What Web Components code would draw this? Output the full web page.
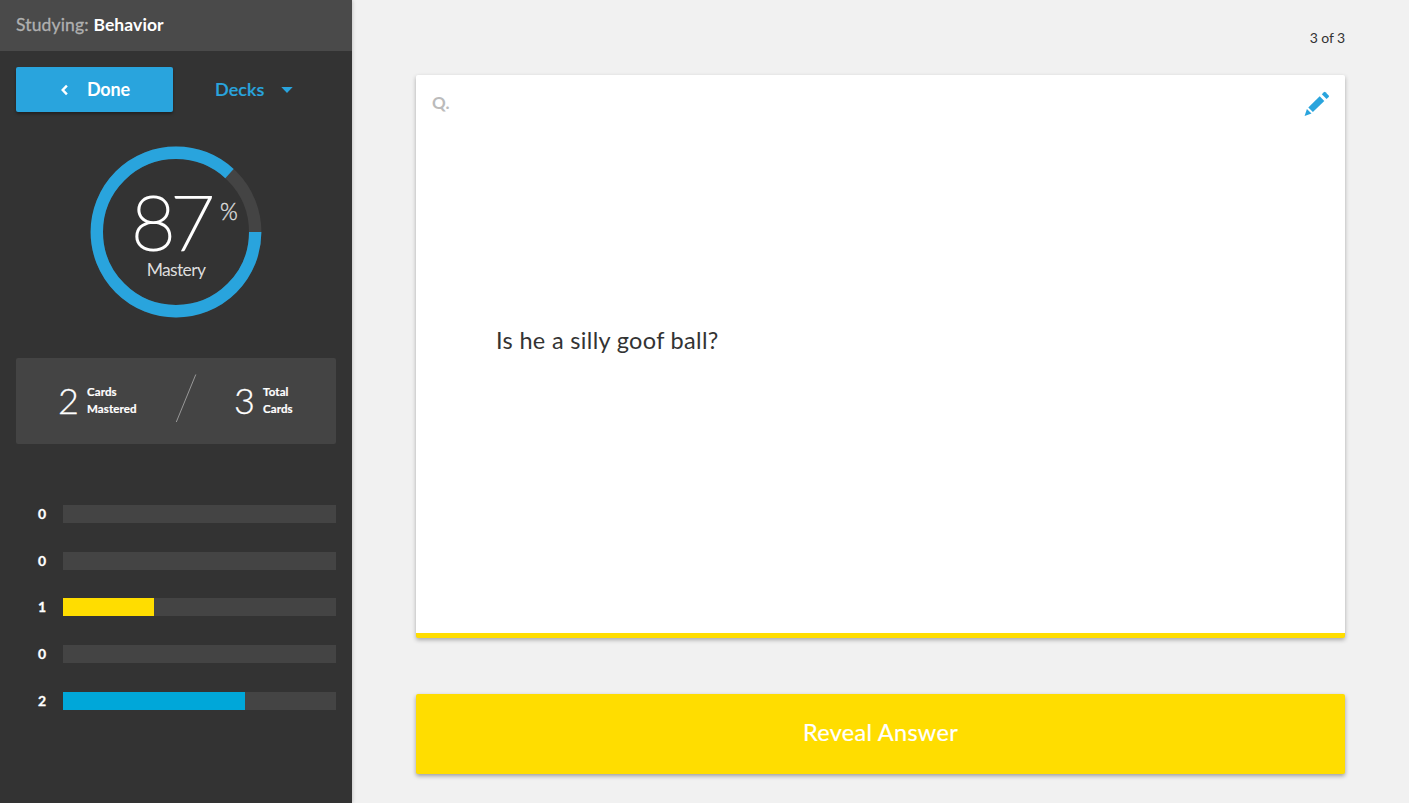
<!DOCTYPE html>
<html lang="en">
<head>
<meta charset="utf-8">
<title>Studying: Behavior</title>
<style>
html,body{margin:0;height:100%;overflow:hidden}
body{font-family:Lato,"Open Sans",sans-serif;background:#f1f1f1;color:#333}
</style>
</head>
<body>
<study-app></study-app>
<script>
function define(name, html, setup) {
  customElements.define(name, class extends HTMLElement {
    constructor() {
      super();
      this.attachShadow({mode: 'open'});
    }
    connectedCallback() {
      const t = document.createElement('template');
      t.innerHTML = html;
      this.shadowRoot.replaceChildren(t.content.cloneNode(true));
      if (setup) setup(this, this.shadowRoot);
    }
  });
}

define('study-header', `
<style>
:host{display:flex;align-items:center;height:51px;padding:0 16px 1px;box-sizing:border-box;background:#4a4a4a;color:#b0b0b0;font-size:17.5px;line-height:22px}
span{white-space:pre}
.k{letter-spacing:.15px;-webkit-text-stroke:.3px #b0b0b0}
.v{color:#fff;font-weight:700;letter-spacing:.1px}
</style><span class="k">Studying: </span><span class="v"><slot></slot></span>`);

define('done-button', `
<style>
:host{display:flex;align-items:center;width:157px;height:45px;box-sizing:border-box;padding:0 0 2px 44px;background:#29a4dd;color:#fff;border-radius:2px;box-shadow:0 2px 3px rgba(0,0,0,.35);font-size:18px;font-weight:700;line-height:24px;letter-spacing:-.2px}
svg{margin:3px 18px 0 0;flex:none}
</style><svg width="9" height="12" viewBox="0 0 9 12"><path d="M6.9 1.6 2.7 6l4.2 4.4" fill="none" stroke="#fff" stroke-width="2.4"/></svg><slot></slot>`);

define('decks-menu', `
<style>
:host{display:flex;align-items:center;color:#29a4dd;font-size:18px;font-weight:600;line-height:24px;padding-bottom:2px;letter-spacing:.1px;-webkit-text-stroke:.2px #29a4dd}
svg{margin:3px 0 0 16px}
</style><slot></slot><svg width="12" height="6" viewBox="0 0 12 6"><path d="M.3 0h11.4L6 6z" fill="#29a4dd"/></svg>`);

define('mastery-ring', `
<style>
:host{display:grid;width:172px;height:172px}
svg,.c{grid-area:1/1}
.c{display:flex;flex-direction:column;align-items:center;color:#fff}
.n{display:flex;height:62px;margin-top:43px;width:172px;box-sizing:border-box;padding-left:41px}
.b{font-size:77px;font-weight:100;line-height:62px;letter-spacing:-5.5px;-webkit-text-stroke:2px #fff;height:62px}
.p{font-size:24px;font-weight:300;line-height:28px;margin:8px 0 0 11px;color:#ddd;-webkit-text-stroke:.4px #ddd;transform:scaleX(.95);transform-origin:0 0}
.m{font-size:17.5px;font-weight:400;line-height:22px;margin-top:8px;color:#ddd;letter-spacing:-.65px}
</style>
<svg width="172" height="172" viewBox="0 0 172 172"><circle cx="86" cy="86" r="79.2" fill="none" stroke="#444" stroke-width="12.4"/><circle cx="86" cy="86" r="79.2" fill="none" stroke="#29a4dd" stroke-width="12.4" pathLength="100" stroke-dasharray="86.8 13.2"/></svg>
<div class="c"><div class="n"><span class="b"><slot></slot></span><span class="p">%</span></div><div class="m">Mastery</div></div>`);

define('card-count', `
<style>
:host{display:flex;align-items:center;color:#fff;padding-bottom:2px}
.n{font-size:36px;font-weight:300;line-height:44px;width:29px;letter-spacing:-1px;-webkit-text-stroke:.3px #fff}
.l{font-size:11.5px;font-weight:700;line-height:17px;letter-spacing:.12px;white-space:pre;-webkit-text-stroke:.2px #fff}
</style><span class="n"></span><span class="l"><slot></slot></span>`,
(h, r) => { r.querySelector('.n').textContent = h.getAttribute('value'); });

define('card-summary', `
<style>
:host{display:flex;height:86px;box-sizing:border-box;background:#444;border-radius:2px;padding-left:42px}
.d{margin:16px 36px 0 0}
</style><slot name="mastered"></slot><svg class="d" width="22" height="49" viewBox="0 0 22 49"><path d="M.3 48 19.8 .5" stroke="#999" fill="none"/></svg><slot name="total"></slot>`);

define('level-bar', `
<style>
:host{display:flex;align-items:center;height:18px}
.n{width:30px;margin-right:17px;text-align:right;font-size:14px;font-weight:700;line-height:18px;color:#fff;-webkit-text-stroke:.3px #fff}
.t{flex:1;height:18px;background:#444}
.f{height:18px}
</style><span class="n"><slot></slot></span><div class="t"><div class="f"></div></div>`,
(h, r) => {
  const f = r.querySelector('.f');
  f.style.width = (h.getAttribute('fill') || 0) + '%';
  f.style.background = h.getAttribute('color') || 'none';
});

define('study-sidebar', `
<style>
:host{display:flex;flex-direction:column;width:352px;flex:none;background:#333;box-shadow:0 0 4px rgba(0,0,0,.25)}
.top{display:flex;align-items:center;padding:16px 16px 0;gap:42px}
mastery-ring{margin:34px 0 0 90px}
card-summary{margin:40px 16px 0}
card-count[slot=mastered]{width:118px}
.bars{display:flex;flex-direction:column;gap:28.8px;margin:60.8px 16px 0}
</style>
<study-header>Behavior</study-header>
<div class="top"><done-button>Done</done-button><decks-menu>Decks</decks-menu></div>
<mastery-ring>87</mastery-ring>
<card-summary><card-count slot="mastered" value="2">Cards<br>Mastered</card-count><card-count slot="total" value="3">Total<br>Cards</card-count></card-summary>
<div class="bars"><level-bar>0</level-bar><level-bar>0</level-bar><level-bar fill="33.33" color="#ffdd00">1</level-bar><level-bar>0</level-bar><level-bar fill="66.67" color="#00a7d9">2</level-bar></div>`);

define('flash-card', `
<style>
:host{display:flex;flex-direction:column;height:563px;box-sizing:border-box;background:#fff;border-bottom:5px solid #fd0;border-radius:2px;box-shadow:0 2px 4px rgba(0,0,0,.3)}
.h{display:flex;justify-content:space-between;padding:16px 15px 0 16px;height:28px}
.q{font-size:17px;font-weight:700;line-height:24px;color:#bbb}
.body{padding:206px 80px 0;font-size:23.5px;line-height:30px;letter-spacing:.33px}
</style>
<div class="h"><span class="q">Q.</span><svg width="26" height="26" viewBox="0 0 26 26"><g fill="#29a4dd"><path d="M15.7 5.3 20.3 9.9 8.9 21 4.3 16.5z"/><path d="m17.2 3.8 2.1-2.1q.8-.7 1.6 0l3.2 3.2q.7.8 0 1.6l-2.1 2.1z" transform="translate(.6 -.5)"/><path d="M2.9 18 7.5 22.4 .6 25z"/></g></svg></div>
<div class="body"><slot></slot></div>`);

define('reveal-button', `
<style>
:host{display:flex;align-items:center;justify-content:center;height:80px;padding-bottom:5px;box-sizing:border-box;background:#fd0;color:#fff;border-radius:2px;box-shadow:0 2px 4px rgba(0,0,0,.35);font-size:23.5px;line-height:30px;letter-spacing:.3px;-webkit-text-stroke:.2px #fff}
</style><slot></slot>`);

define('study-main', `
<style>
:host{display:flex;flex-direction:column;flex:1;padding:28px 64px 0}
.c{text-align:right;font-size:14px;line-height:20px;height:47px;color:#333;letter-spacing:-.1px}
reveal-button{margin-top:56px}
</style><div class="c">3 of 3</div><flash-card><span>Is he a silly goof ball?</span></flash-card><reveal-button><span>Reveal Answer</span></reveal-button>`);

define('study-app', `<style>:host{display:flex;height:803px;background:#f1f1f1}study-sidebar{position:relative}</style><study-sidebar></study-sidebar><study-main></study-main>`);
</script>
</body>
</html>
